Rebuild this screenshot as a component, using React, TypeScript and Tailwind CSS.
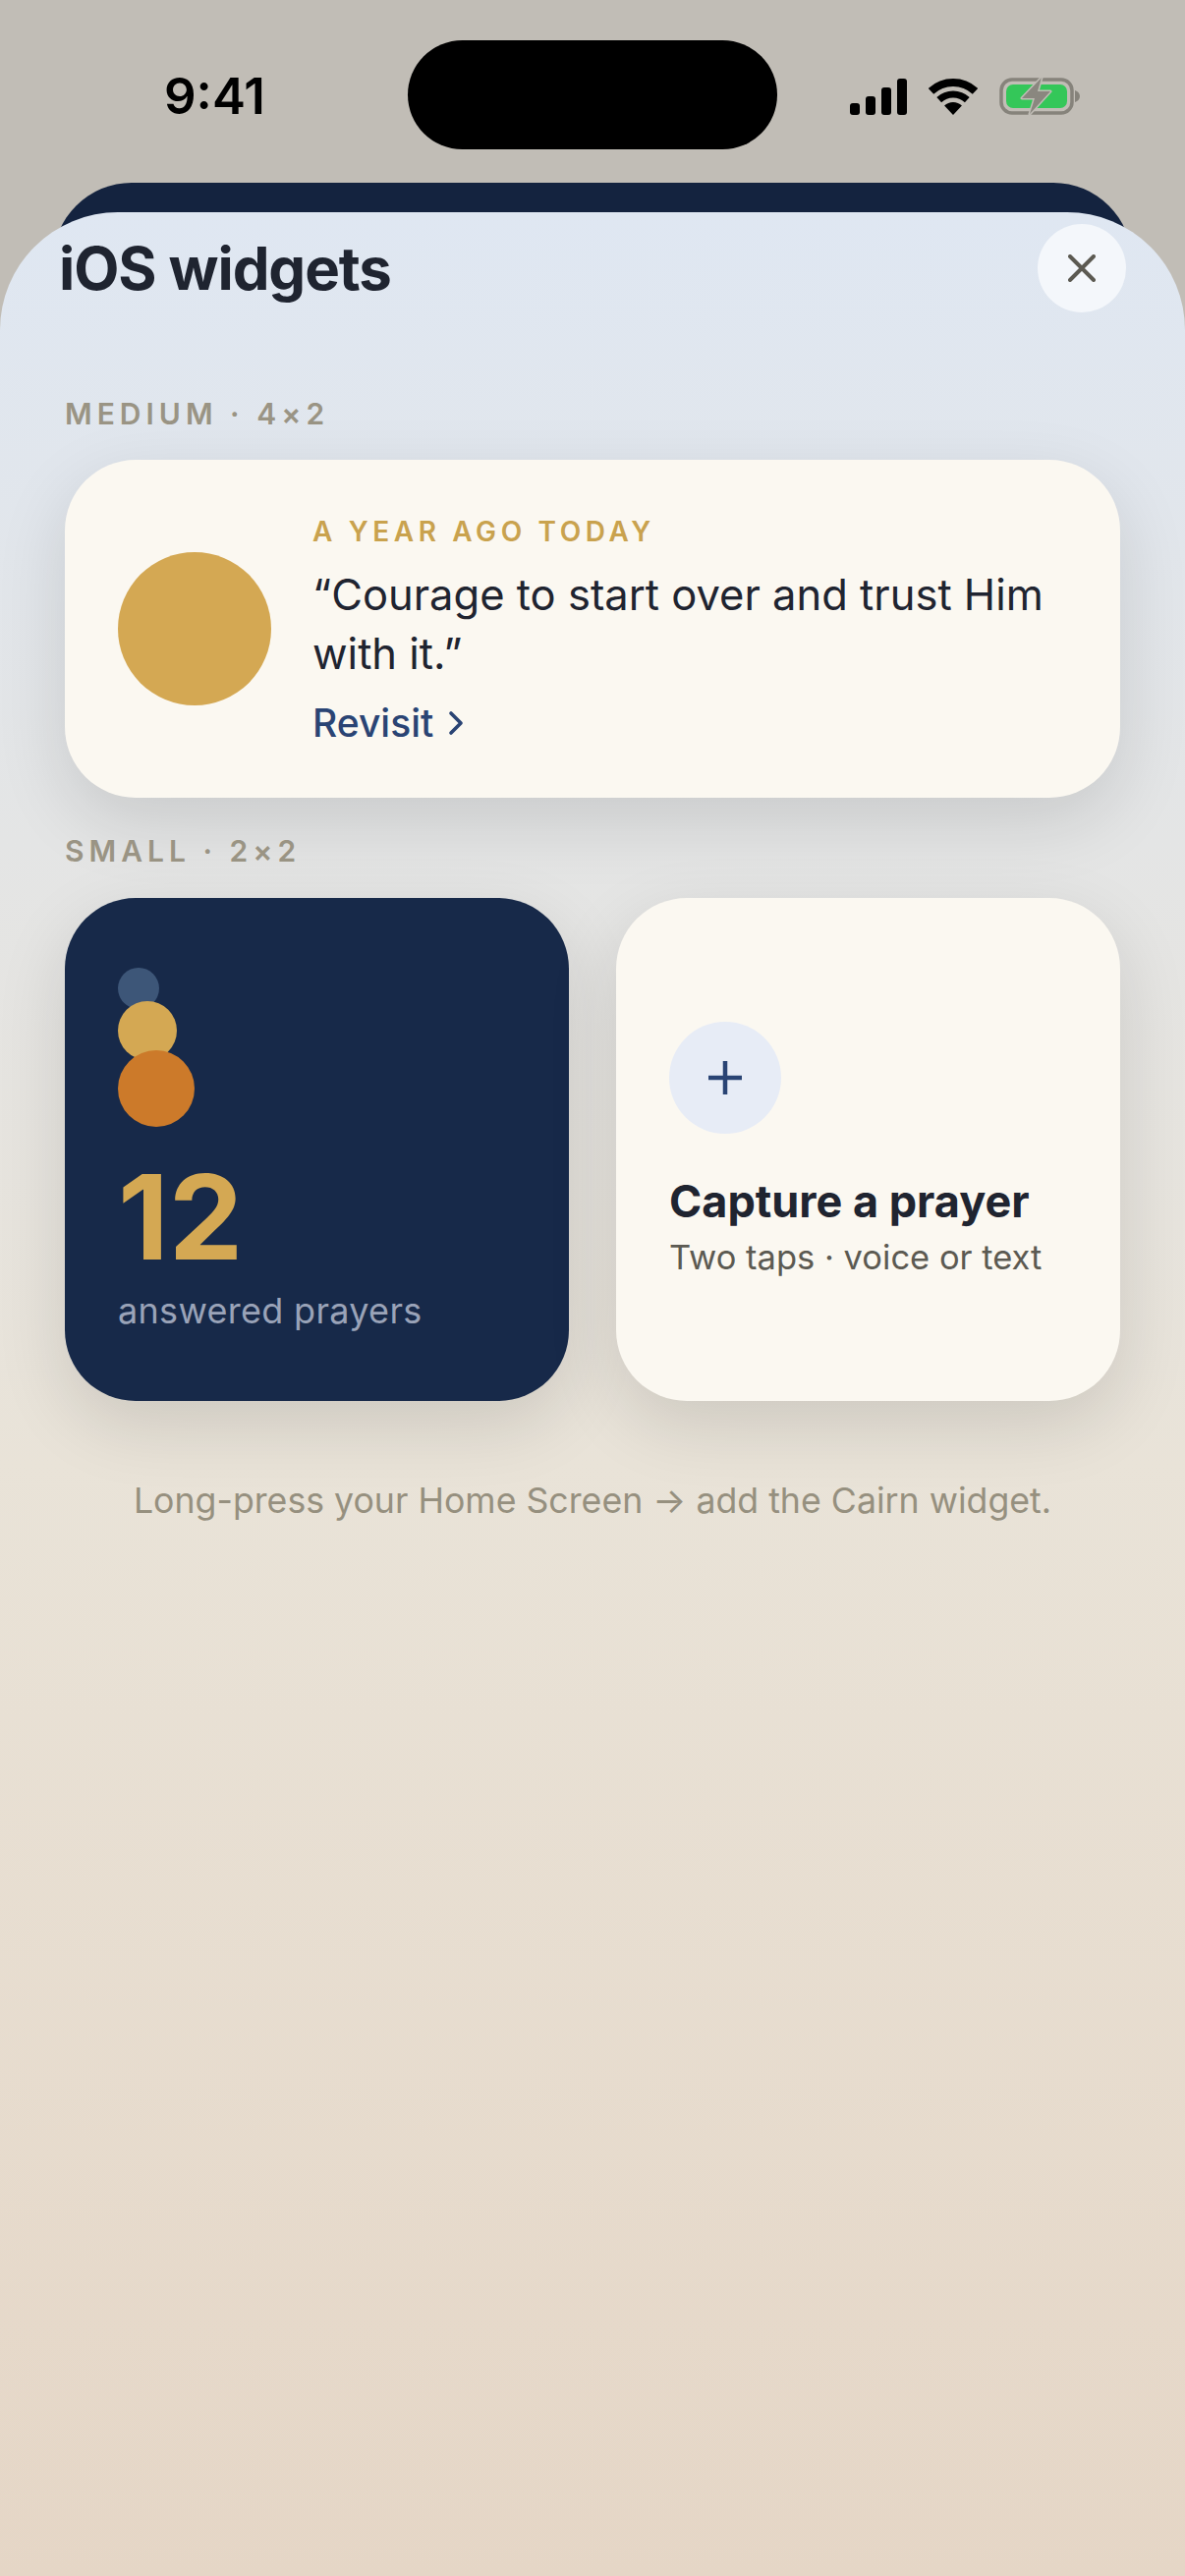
import { ChevronRight } from "lucide-react";

function Signal() {
  return (
    <svg width="58" height="37" viewBox="0 0 58 37" fill="#000">
      <rect x="0" y="25" width="10" height="12" rx="3" />
      <rect x="16" y="18" width="10" height="19" rx="3" />
      <rect x="32" y="9" width="10" height="28" rx="3" />
      <rect x="48" y="0" width="10" height="37" rx="3" />
    </svg>
  );
}

function Wifi() {
  return (
    <svg width="50" height="37" viewBox="0 0 50 37" fill="none" stroke="#000">
      <path d="M2.5 12.9A33 33 0 0 1 47.5 12.9" strokeWidth="8" />
      <path d="M10.7 21.6A21 21 0 0 1 39.3 21.6" strokeWidth="7" />
      <path d="M25 37L16.1 27.5A13 13 0 0 1 33.9 27.5Z" fill="#000" stroke="none" />
    </svg>
  );
}

function Battery() {
  return (
    <svg width="82" height="40" viewBox="0 0 82 40" fill="none">
      <rect x="2" y="3" width="72" height="34" rx="11" stroke="#86837b" strokeWidth="3.5" />
      <rect x="7" y="8" width="62" height="24" rx="7" fill="#34c759" />
      <path d="M77 14C80 15 82 17 82 20C82 23 80 25 77 26Z" fill="#86837b" />
      <path
        d="M43 1L23 22L36 22L31 38L52 15L39 15Z"
        fill="#8a877f"
        stroke="#c1bdb6"
        strokeWidth="3"
        strokeLinejoin="round"
        paintOrder="stroke"
      />
    </svg>
  );
}

function SectionLabel({ children }: { children: string }) {
  return (
    <div className="text-[30px] leading-[36px] font-semibold tracking-[5px] text-[#9a9484]">{children}</div>
  );
}

export default function App() {
  return (
    <div className="relative flex flex-col w-[1206px] h-[2622px] overflow-hidden bg-[#c1bdb6] font-['Inter',sans-serif]">
      {/* status bar */}
      <div className="relative flex items-start justify-between h-[216px] shrink-0 pl-[167px] pr-[107px] pt-[67px]">
        <span className="text-[51px] leading-[62px] font-semibold text-black">9:41</span>
        <div className="absolute left-[415px] top-[41px] w-[376px] h-[111px] rounded-full bg-black" />
        <div className="flex items-center gap-[22px] pt-[11px]">
          <Signal />
          <Wifi />
          <Battery />
        </div>
      </div>

      {/* sheet stacked behind */}
      <div className="absolute left-[54px] right-[54px] top-[186px] h-[160px] rounded-[110px] bg-[#14233f]" />

      {/* sheet */}
      <div className="relative flex-1 rounded-t-[120px] bg-linear-to-b from-[#dfe7f2] via-[#e9e3d8] via-[53%] to-[#e5d6c6]">
        <div className="flex items-center justify-between pl-[60px] pr-[60px] pt-[12px]">
          <h1 className="text-[60px] leading-[72px] font-bold tracking-[-1.1px] text-[#1f2430]">iOS widgets</h1>
          <button className="flex items-center justify-center w-[90px] h-[90px] rounded-full bg-[#f4f7fb]">
            <svg width="28" height="28" viewBox="0 0 28 28" fill="none" stroke="#5c5a52" strokeWidth="4" strokeLinecap="round">
              <path d="M2 2L26 26M26 2L2 26" />
            </svg>
          </button>
        </div>

        <div className="flex flex-col px-[66px] pt-[85px]">
          <SectionLabel>MEDIUM · 4×2</SectionLabel>

          <div className="flex items-center gap-[42px] h-[344px] mt-[29px] pl-[54px] pr-[40px] rounded-[72px] bg-[#fbf8f1] shadow-[0_24px_72px_rgba(0,0,0,0.12)]">
            <div className="w-[156px] h-[156px] shrink-0 rounded-full bg-[#d4a853]" />
            <div className="flex flex-col pt-[2px]">
              <div className="text-[28px] leading-[36px] font-semibold tracking-[4.6px] text-[#c9a24e]">A YEAR AGO TODAY</div>
              <p className="mt-[16px] text-[43.5px] leading-[60px] text-[#1f2430]">“Courage to start over and trust Him with it.”</p>
              <div className="flex items-center gap-[3px] mt-[17px] text-[39px] leading-[48px] font-medium text-[#2a4474]">
                Revisit <ChevronRight size={40} strokeWidth={2.2} />
              </div>
            </div>
          </div>

          <div className="mt-[36px]">
            <SectionLabel>SMALL · 2×2</SectionLabel>
          </div>

          <div className="grid grid-cols-2 gap-[48px] mt-[30px]">
            <div className="flex flex-col h-[512px] pl-[54px] pt-[71px] rounded-[72px] bg-[#172949] shadow-[0_24px_72px_rgba(0,0,0,0.12)]">
              <div className="flex flex-col items-start">
                <div className="w-[42px] h-[42px] rounded-full bg-[#3d5678]" />
                <div className="w-[60px] h-[60px] -mt-[8px] rounded-full bg-[#d4a853]" />
                <div className="w-[78px] h-[78px] -mt-[10px] rounded-full bg-[#cc7a2a]" />
              </div>
              <div className="mt-[29px] text-[120px] leading-[126px] font-bold text-[#d4a853]">12</div>
              <div className="mt-[8px] text-[36px] leading-[48px] tracking-[0.3px] text-[#9aa3b8]">answered prayers</div>
            </div>

            <div className="flex flex-col h-[512px] pl-[54px] pt-[126px] rounded-[72px] bg-[#fbf8f1] shadow-[0_24px_72px_rgba(0,0,0,0.12)]">
              <div className="flex items-center justify-center w-[114px] h-[114px] rounded-full bg-[#e7ecf6]">
                <svg width="34" height="34" viewBox="0 0 34 34" fill="none" stroke="#2a4474" strokeWidth="4.5">
                  <path d="M0 17H34M17 0V34" />
                </svg>
              </div>
              <div className="mt-[39px] text-[45px] leading-[60px] font-bold text-[#1f2430]">Capture a prayer</div>
              <div className="mt-[3px] text-[34.5px] leading-[48px] text-[#5c5a52]">Two taps · voice or text</div>
            </div>
          </div>

          <p className="mt-[74px] text-center text-[35.7px] leading-[54px] text-[#96907f]">Long-press your Home Screen → add the Cairn widget.</p>
        </div>
      </div>
    </div>
  );
}
